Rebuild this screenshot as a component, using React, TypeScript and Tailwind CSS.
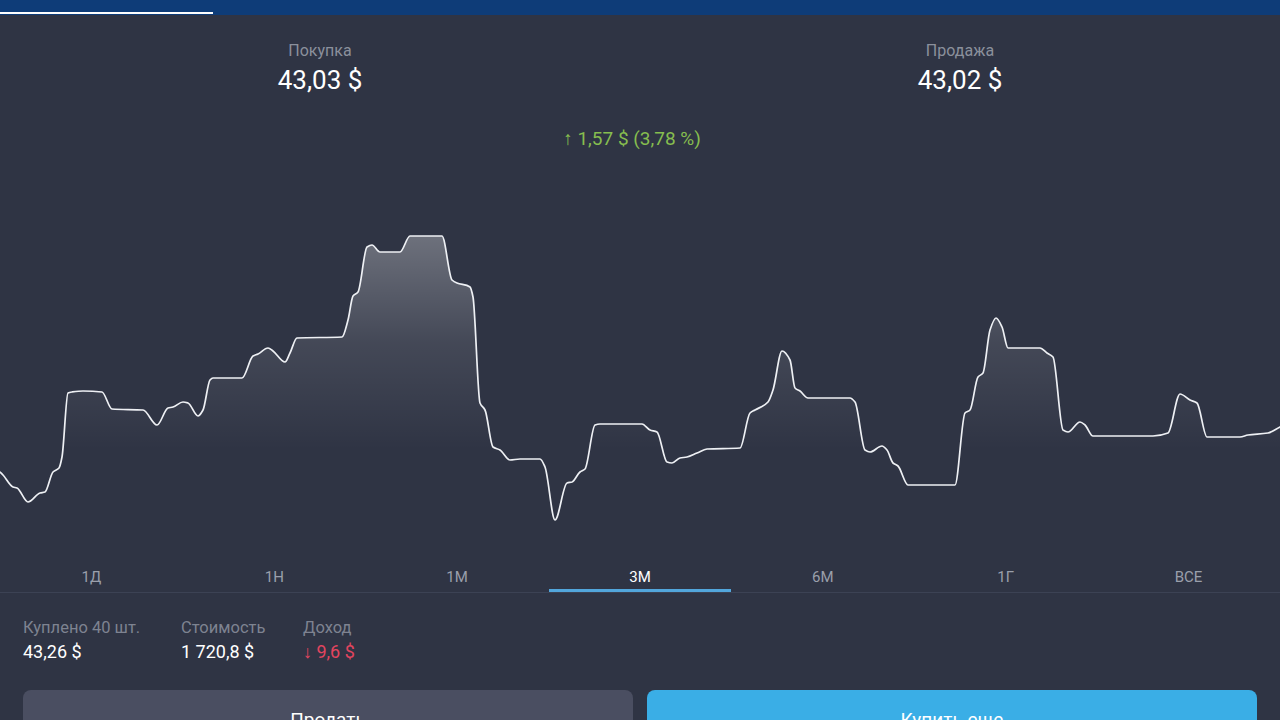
import React from "react";

const PTS: [number, number][] = [
  [0, 472], [3, 475], [13, 487], [17, 488], [28, 502], [40, 493], [45, 492], [53, 472], [59, 468], [62, 457],
  [68, 393], [72, 392], [83, 391], [102, 392], [112, 409], [143, 410], [157, 425], [168, 408], [173, 407],
  [183, 402], [188, 403], [198, 416], [203, 410], [210, 380], [213, 378], [242, 378], [253, 356], [258, 354],
  [268, 348], [273, 351], [285, 362], [290, 353], [297, 338], [342, 337], [348, 320], [353, 296], [358, 292],
  [367, 247], [372, 245], [380, 252], [400, 252], [410, 236], [442, 236], [452, 280], [457, 283], [470, 287],
  [473, 297], [480, 403], [485, 410], [493, 447], [500, 450], [510, 460], [520, 459], [540, 459], [545, 467],
  [555, 520], [567, 483], [572, 482], [580, 472], [585, 469], [595, 425], [600, 424], [642, 424], [650, 430],
  [657, 432], [667, 462], [672, 463], [680, 458], [687, 457], [697, 453], [707, 449], [740, 448], [750, 413],
  [755, 410], [768, 402], [773, 390], [782, 351], [790, 360], [795, 388], [800, 391], [808, 398], [850, 398],
  [855, 402], [865, 450], [870, 452], [882, 446], [887, 450], [893, 463], [898, 466], [908, 485], [955, 485],
  [965, 413], [970, 410], [978, 377], [983, 373], [990, 330], [996, 318], [1002, 327], [1008, 348], [1040, 348],
  [1047, 353], [1053, 357], [1063, 430], [1068, 432], [1080, 422], [1085, 425], [1093, 436], [1153, 436],
  [1168, 433], [1180, 394], [1190, 400], [1197, 403], [1207, 437], [1240, 437], [1248, 435], [1268, 433],
  [1280, 427],
];

function monotonePath(pts: [number, number][]) {
  const n = pts.length;
  const dx: number[] = [];
  const m: number[] = [];
  for (let i = 0; i < n - 1; i++) {
    dx.push(pts[i + 1][0] - pts[i][0]);
    m.push((pts[i + 1][1] - pts[i][1]) / dx[i]);
  }
  const t: number[] = new Array(n).fill(0);
  t[0] = m[0];
  t[n - 1] = m[n - 2];
  for (let i = 1; i < n - 1; i++) {
    if (m[i - 1] * m[i] <= 0) t[i] = 0;
    else {
      const w1 = 2 * dx[i] + dx[i - 1];
      const w2 = dx[i] + 2 * dx[i - 1];
      t[i] = (w1 + w2) / (w1 / m[i - 1] + w2 / m[i]);
    }
  }
  let d = `M${pts[0][0]},${pts[0][1]}`;
  for (let i = 0; i < n - 1; i++) {
    const h = dx[i] / 3;
    const c1x = pts[i][0] + h;
    const c1y = pts[i][1] + t[i] * h;
    const c2x = pts[i + 1][0] - h;
    const c2y = pts[i + 1][1] - t[i + 1] * h;
    d += ` C${c1x.toFixed(1)},${c1y.toFixed(1)} ${c2x.toFixed(1)},${c2y.toFixed(1)} ${pts[i + 1][0]},${pts[i + 1][1]}`;
  }
  return d;
}

function Chart() {
  const line = monotonePath(PTS);
  const area = `${line} L1280,560 L0,560 Z`;
  return (
    <svg width="1280" height="360" viewBox="0 200 1280 360" className="block">
      <defs>
        <linearGradient id="fillg" x1="0" y1="236" x2="0" y2="450" gradientUnits="userSpaceOnUse">
          <stop offset="0" stopColor="#ffffff" stopOpacity="0.3" />
          <stop offset="0.5" stopColor="#ffffff" stopOpacity="0.1" />
          <stop offset="1" stopColor="#ffffff" stopOpacity="0" />
        </linearGradient>
      </defs>
      <path d={area} fill="url(#fillg)" />
      <path d={line} fill="none" stroke="#eef0f4" strokeWidth="1.7" strokeLinejoin="round" strokeLinecap="round" />
    </svg>
  );
}

const TABS = ["1Д", "1Н", "1М", "3М", "6М", "1Г", "ВСЕ"];

export default function App() {
  return (
    <div className="w-[1280px] h-[720px] overflow-hidden bg-[#2f3444] flex flex-col font-['Roboto',_'Noto_Sans',_sans-serif]">
      <div className="h-[15px] bg-[#0e3c78] shrink-0">
        <div className="w-[213px] h-[2px] bg-white mt-[12px]" />
      </div>

      <div className="h-[185px] shrink-0 flex flex-col">
        <div className="grid grid-cols-2 pt-[26px]">
          <div className="flex flex-col items-center">
            <div className="text-[16px] leading-[19px] text-[#8b909c]">Покупка</div>
            <div className="mt-[5px] text-[26px] leading-[30px] text-white">43,03 $</div>
          </div>
          <div className="flex flex-col items-center">
            <div className="text-[16px] leading-[19px] text-[#8b909c]">Продажа</div>
            <div className="mt-[5px] text-[26px] leading-[30px] text-white">43,02 $</div>
          </div>
        </div>
        <div className="mt-[33px] text-center pr-[16px] text-[19px] leading-[22px] text-[#86bd4f]">
          ↑ 1,57 $ (3,78 %)
        </div>
      </div>

      <div className="h-[360px] shrink-0">
        <Chart />
      </div>

      <div className="h-[33px] shrink-0 grid grid-cols-7 border-b border-[#3c4254]">
        {TABS.map((t, i) => (
          <div key={t} className="flex flex-col items-center h-[32px]">
            <div
              className={
                "pt-[8px] text-[15px] leading-[18px] " +
                (i === 3 ? "text-white" : "text-[#9a9fab]")
              }
            >
              {t}
            </div>
            {i === 3 ? (
              <div className="mt-auto h-[3px] w-full bg-[#52a6dc]" />
            ) : null}
          </div>
        ))}
      </div>

      <div className="flex px-[23px] pt-[25px]">
        <div className="w-[158px] flex flex-col">
          <div className="text-[16.5px] leading-[19px] text-[#7e8391]">Куплено 40 шт.</div>
          <div className="mt-[5px] text-[18px] leading-[20px] text-white">43,26 $</div>
        </div>
        <div className="w-[122px] flex flex-col">
          <div className="text-[16.5px] leading-[19px] text-[#7e8391]">Стоимость</div>
          <div className="mt-[5px] text-[18px] leading-[20px] text-white">1 720,8 $</div>
        </div>
        <div className="flex flex-col">
          <div className="text-[16.5px] leading-[19px] text-[#7e8391]">Доход</div>
          <div className="mt-[5px] text-[18px] leading-[20px] text-[#e3455f]">↓ 9,6 $</div>
        </div>
      </div>

      <div className="mt-[28px] px-[23px] flex gap-[14px] shrink-0">
        <button className="flex-1 h-[60px] rounded-[8px] bg-[#4a4e61] text-white text-[19px] flex items-center justify-center">
          Продать
        </button>
        <button className="flex-1 h-[60px] rounded-[8px] bg-[#3aaee6] text-white text-[19px] flex items-center justify-center">
          Купить еще
        </button>
      </div>
    </div>
  );
}
